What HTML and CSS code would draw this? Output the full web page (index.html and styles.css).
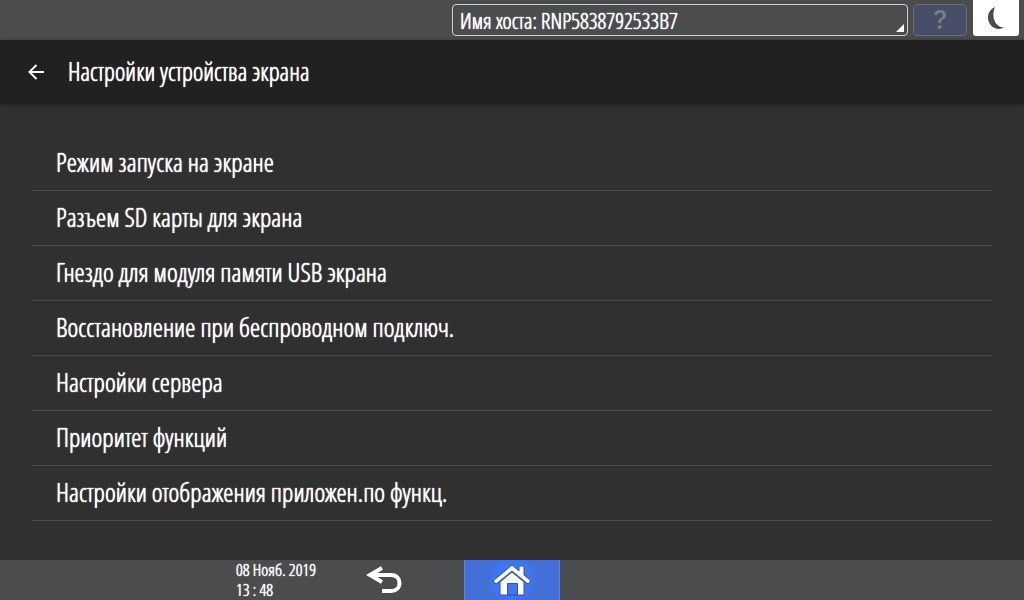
FILE: index.html
```html
<!DOCTYPE html>
<html lang="ru">
<head>
<meta charset="utf-8">
<title>Настройки устройства экрана</title>
<link rel="stylesheet" href="styles.css">
</head>
<body>
<div class="status_bar">
	<div class="host_box">
		<select class="host" aria-label="Имя хоста">
			<option>Имя хоста: RNP5838792533B7</option>
		</select>
		<span class="corner"></span>
	</div>
	<button class="help" disabled>?</button>
	<button class="sleep" aria-label="Спящий режим">
		<svg width="46" height="36" viewBox="0 0 46 36">
			<path d="M22 7C14 10 13 20 18 25.500C21 29 27 30 31 27.500C22 27 18 17 22 7Z" fill="#4b4c4e"/>
		</svg>
	</button>
</div>

<div class="title_bar">
	<a class="back" href="#" aria-label="Назад">
		<svg width="16" height="16" viewBox="0 0 16 16" fill="none" stroke="#fff" stroke-width="2">
			<path d="M16 8H2M8.5 1L1.5 8L8.5 15"/>
		</svg>
	</a>
	<h1>Настройки устройства экрана</h1>
</div>

<div class="content">
	<ul class="settings">
		<li><a href="#">Режим запуска на экране</a></li>
		<li><a href="#">Разъем SD карты для экрана</a></li>
		<li><a href="#">Гнездо для модуля памяти USB экрана</a></li>
		<li><a href="#">Восстановление при беспроводном подключ.</a></li>
		<li><a href="#">Настройки сервера</a></li>
		<li><a href="#">Приоритет функций</a></li>
		<li><a href="#">Настройки отображения приложен.по функц.</a></li>
	</ul>
</div>

<div class="nav_bar">
	<div class="nav_left">
		<div class="clock">
			<div>08 Нояб. 2019</div>
			<div>13 : 48</div>
		</div>
		<button class="nav_back" aria-label="Назад">
			<svg width="36" height="28" viewBox="0 0 36 28">
				<path d="M16 2L4 9L16 16" fill="none" stroke="#fff" stroke-width="4"/>
				<path d="M4 9H25C31 9 33.500 13 33.500 17C33.500 22 30 25 25 25H16" fill="none" stroke="#fff" stroke-width="4"/>
			</svg>
		</button>
	</div>
	<button class="nav_home" aria-label="Домой">
		<svg width="38" height="32" viewBox="0 0 38 32">
			<path d="M7 31V18L19 8L31 18V31Z" fill="#fff" stroke="#2f55b0"/>
			<path d="M14.500 31V19.500H24.500V31Z" fill="#3f74f5" stroke="#2f55b0"/>
			<path d="M19 1L26 7V2H31V11L38 17L35 20L19 7L3 20L0 17Z" fill="#fff" stroke="#2f55b0"/>
		</svg>
	</button>
</div>
</body>
</html>
```
FILE: styles.css
```css
* {
box-sizing:border-box;
}

body {
margin:0;
min-height:100vh;
display:flex;
flex-direction:column;
background:#303030;
color:#fff;
font-family:"Open Sans Condensed Light", "Open Sans Condensed", "Roboto Condensed", sans-serif;
text-shadow:0 0 1px #fff, 0 0 1px #fff;
}

button {
padding:0;
border:0;
font-family:inherit;
}

svg {
display:block;
}

/* top bar */
.status_bar {
display:flex;
justify-content:flex-end;
height:40px;
padding-right:5px;
background:#4b4c4e;
}

.host_box {
position:relative;
width:456px;
height:32px;
margin-top:4px;
}

.host {
appearance:none;
width:100%;
height:100%;
padding:0 7px 2px;
border:1px solid #d0d0d0;
border-radius:4px;
background:none;
color:#fff;
font-family:inherit;
font-size:22px;
text-shadow:inherit;
}

.corner {
position:absolute;
right:4px;
bottom:4px;
border-left:8px solid transparent;
border-bottom:8px solid #fff;
}

.help {
width:54px;
height:32px;
margin:4px 6px 0 5px;
border:1px solid #6b6c70;
border-radius:4px;
background:#474f68;
color:#7d7e80;
font-family:Inter, sans-serif;
font-size:26px;
font-weight:500;
line-height:30px;
}

.sleep {
width:46px;
height:36px;
border-radius:0 0 3px 3px;
background:#fff;
}

/* page title */
.title_bar {
display:flex;
align-items:center;
gap:24px;
height:64px;
padding-left:28px;
background:#212121;
box-shadow:0 1px 4px rgba(0,0,0,0.4);
}

.title_bar h1 {
margin:0;
padding-bottom:2px;
font-size:25px;
font-weight:normal;
}

/* list */
.content {
flex:1;
padding:32px;
}

.settings {
margin:0;
padding:0;
list-style:none;
}

.settings a {
display:block;
height:55px;
padding-left:24px;
border-bottom:1px solid #4a4a4a;
color:#fff;
font-size:26px;
line-height:52px;
text-decoration:none;
}

/* bottom bar */
.nav_bar {
display:grid;
grid-template-columns:1fr 96px 1fr;
height:40px;
background:#4b4c4e;
}

.nav_left {
display:flex;
justify-content:flex-end;
padding-right:32px;
}

.clock {
width:100px;
font-size:17px;
line-height:20px;
}

.nav_back {
display:flex;
align-items:center;
justify-content:center;
width:96px;
height:40px;
background:none;
}

.nav_home {
display:flex;
align-items:center;
justify-content:center;
height:40px;
border:1px solid #5b86e8;
border-width:0 1px;
background:radial-gradient(circle, #3a78ff 0, #3a78ff 30%, #446fd6 50%);
}
```
